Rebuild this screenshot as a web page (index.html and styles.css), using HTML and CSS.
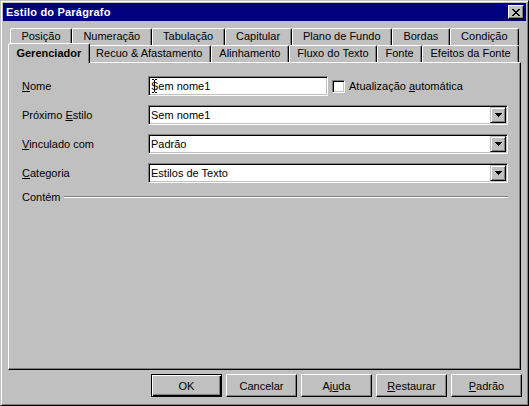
FILE: index.html
```html
<!DOCTYPE html>
<html lang="pt">
<head>
<meta charset="utf-8">
<title>Estilo do Parágrafo</title>
<link rel="stylesheet" href="styles.css">
</head>
<body>
<div class="window">
  <div class="titlebar">
    <span class="title">Estilo do Parágrafo</span>
    <span class="close">
      <svg width="8" height="7" viewBox="0 0 8 7" shape-rendering="crispEdges"><path d="M0 0h2v1h-2z M6 0h2v1h-2z M1 1h2v1h-2z M5 1h2v1h-2z M2 2h4v1h-4z M3 3h2v1h-2z M2 4h4v1h-4z M1 5h2v1h-2z M5 5h2v1h-2z M0 6h2v1h-2z M6 6h2v1h-2z" fill="#000"/></svg>
    </span>
  </div>

  <div class="tabs">
    <div class="tabrow">
      <div class="tab">Posição</div>
      <div class="tab">Numeração</div>
      <div class="tab">Tabulação</div>
      <div class="tab">Capitular</div>
      <div class="tab">Plano de Fundo</div>
      <div class="tab">Bordas</div>
      <div class="tab">Condição</div>
    </div>
    <div class="tabrow">
      <div class="tab selected">Gerenciador</div>
      <div class="tab">Recuo &amp; Afastamento</div>
      <div class="tab">Alinhamento</div>
      <div class="tab">Fluxo do Texto</div>
      <div class="tab">Fonte</div>
      <div class="tab">Efeitos da Fonte</div>
    </div>
  </div>

  <div class="panel">
    <div class="form">
      <span class="label"><u>N</u>ome</span>
      <div class="field-line">
        <div class="textbox name">Sem nome1<span class="ibeam"><svg width="5" height="14" viewBox="0 0 5 14" shape-rendering="crispEdges"><path d="M0 0h2v1h-2z M3 0h2v1h-2z M2 1h1v12h-1z M0 13h2v1h-2z M3 13h2v1h-2z" fill="#000"/></svg></span></div>
        <span class="checkbox"></span>
        <span class="check-label">Atualização <u>a</u>utomática</span>
      </div>

      <span class="label">Próximo <u>E</u>stilo</span>
      <div class="combo"><span class="combo-text">Sem nome1</span><span class="drop"><svg width="7" height="4" viewBox="0 0 7 4" shape-rendering="crispEdges"><path d="M0 0h7v1h-7z M1 1h5v1h-5z M2 2h3v1h-3z M3 3h1v1h-1z" fill="#000"/></svg></span></div>

      <span class="label"><u>V</u>inculado com</span>
      <div class="combo"><span class="combo-text">Padrão</span><span class="drop"><svg width="7" height="4" viewBox="0 0 7 4" shape-rendering="crispEdges"><path d="M0 0h7v1h-7z M1 1h5v1h-5z M2 2h3v1h-3z M3 3h1v1h-1z" fill="#000"/></svg></span></div>

      <span class="label"><u>C</u>ategoria</span>
      <div class="combo"><span class="combo-text">Estilos de Texto</span><span class="drop"><svg width="7" height="4" viewBox="0 0 7 4" shape-rendering="crispEdges"><path d="M0 0h7v1h-7z M1 1h5v1h-5z M2 2h3v1h-3z M3 3h1v1h-1z" fill="#000"/></svg></span></div>
    </div>
    <div class="group">
      <span class="group-title">Contém</span>
      <span class="etch"></span>
    </div>
  </div>

  <div class="buttons">
    <div class="btn default">OK</div>
    <div class="btn">Cancelar</div>
    <div class="btn">Aj<u>u</u>da</div>
    <div class="btn"><u>R</u>estaurar</div>
    <div class="btn"><u>P</u>adrão</div>
  </div>
</div>
</body>
</html>
```

FILE: styles.css
```css
* { box-sizing: border-box; }
html, body { margin: 0; padding: 0; }
body {
  width: 529px;
  height: 406px;
  overflow: hidden;
  background: #c0c0c0;
  font-family: "Liberation Sans", Arial, sans-serif;
  font-size: 11px;
  color: #000;
}
u { text-decoration: underline; text-underline-offset: 1px; }

.window {
  width: 529px;
  height: 406px;
  display: flex;
  flex-direction: column;
  background: #c0c0c0;
  border: 1px solid;
  border-color: #c0c0c0 #000 #000 #c0c0c0;
  box-shadow: inset 1px 1px #fff, inset -1px -1px #808080;
  padding: 2px;
}

.titlebar {
  height: 18px;
  flex: none;
  background: #000080;
  color: #fff;
  display: flex;
  align-items: center;
  justify-content: space-between;
  padding: 0 2px 0 3px;
}
.title { font-weight: bold; font-size: 11px; letter-spacing: 0.2px; }
.close {
  width: 16px;
  height: 14px;
  background: #c0c0c0;
  border: 1px solid;
  border-color: #fff #000 #000 #fff;
  box-shadow: inset -1px -1px #808080;
  display: flex;
  align-items: center;
  justify-content: center;
}
.close svg { display: block; }

.tabs { flex: none; margin: 7px 5px 0; padding: 0 2px; }
.tabrow { display: flex; height: 17px; }
.tab {
  flex: 1 1 auto;
  min-width: 0;
  padding: 0 4px;
  text-align: center;
  line-height: 15px;
  white-space: nowrap;
  background: #c0c0c0;
  border: 1px solid;
  border-bottom: 0;
  border-color: #fff #000 transparent #fff;
  box-shadow: inset -1px 0 #808080;
  border-radius: 2px 2px 0 0;
}
.tab.selected {
  position: relative;
  z-index: 1;
  margin: -2px -2px -1px;
  padding-top: 2px;
  height: 20px;
  font-weight: bold;
}

.panel {
  flex: 1;
  margin: 0 5px;
  border: 1px solid;
  border-color: #fff #000 #000 #fff;
  box-shadow: inset -1px -1px #808080;
}

.form {
  display: grid;
  grid-template-columns: 126px 1fr;
  grid-auto-rows: 20px;
  row-gap: 9px;
  align-items: center;
  padding: 13px 12px 0 13px;
}
.label { line-height: 14px; }
.field-line { display: flex; align-items: center; height: 20px; }

.textbox, .combo {
  height: 20px;
  background: #fff;
  border: 1px solid;
  border-color: #808080 #fff #fff #808080;
  box-shadow: inset 1px 1px #000, inset -1px -1px #c0c0c0;
  line-height: 18px;
}
.textbox { padding-left: 2px; position: relative; white-space: nowrap; }
.textbox.name { width: 180px; }
.ibeam { position: absolute; left: 3px; top: 2px; line-height: 0; }
.ibeam svg { display: block; }

.checkbox {
  width: 13px;
  height: 13px;
  margin-left: 4px;
  background: #fff;
  border: 1px solid;
  border-color: #808080 #fff #fff #808080;
  box-shadow: inset 1px 1px #000, inset -1px -1px #c0c0c0;
}
.check-label { margin-left: 4px; white-space: nowrap; }

.combo { display: flex; padding: 1px; }
.combo-text { flex: 1; padding-left: 1px; line-height: 16px; white-space: nowrap; }
.drop {
  width: 16px;
  height: 16px;
  flex: none;
  background: #c0c0c0;
  border: 1px solid;
  border-color: #c0c0c0 #000 #000 #c0c0c0;
  box-shadow: inset 1px 1px #fff, inset -1px -1px #808080;
  display: flex;
  align-items: center;
  justify-content: center;
}
.drop svg { display: block; }

.group {
  display: flex;
  align-items: center;
  margin: 7px 12px 0 13px;
  line-height: 14px;
}
.etch {
  flex: 1;
  height: 2px;
  margin-left: 3px;
  border-top: 1px solid #808080;
  border-bottom: 1px solid #fff;
}

.buttons {
  flex: none;
  display: flex;
  justify-content: flex-end;
  gap: 4px;
  margin: 4px 4px 6px 0;
}
.btn {
  width: 71px;
  height: 23px;
  display: flex;
  align-items: center;
  justify-content: center;
  border: 1px solid;
  border-color: #fff #000 #000 #fff;
  box-shadow: inset -1px -1px #808080;
}
.btn.default {
  border-color: #000;
  box-shadow: inset 1px 1px #fff, inset -1px -1px #000, inset -2px -2px #808080;
}
```
